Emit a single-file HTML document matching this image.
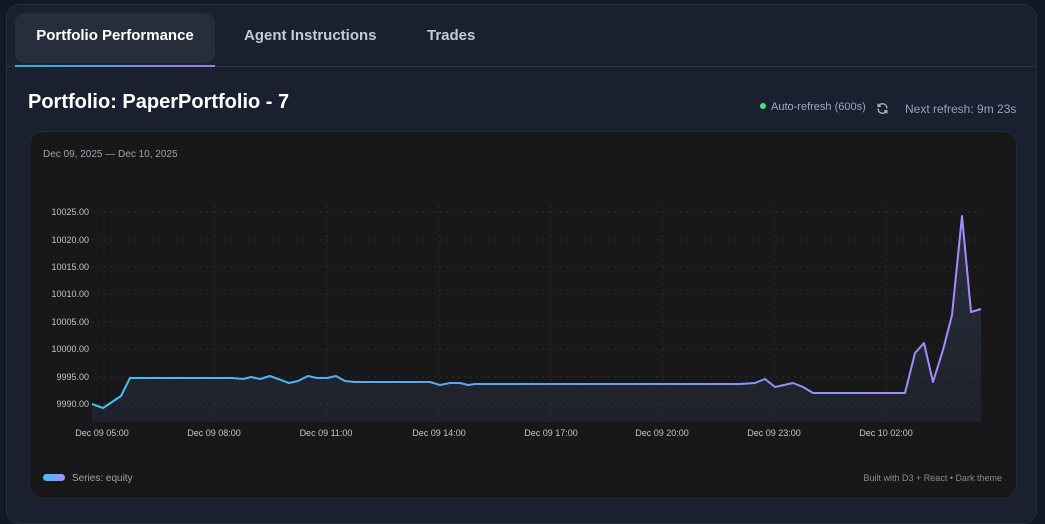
<!DOCTYPE html>
<html><head><style>
*{margin:0;padding:0;box-sizing:border-box}
body{width:1045px;height:506px;background:#121826;font-family:"Liberation Sans",sans-serif;overflow:hidden;position:relative}
.card{position:absolute;left:6px;top:4px;width:1031px;height:520px;background:#1a2030;border-radius:14px;border:1px solid #262d3d}
.tabs{position:absolute;left:0;top:0;width:100%;height:62px;border-bottom:1px solid #2c3344}
.tab{position:absolute;top:8px;height:50px;line-height:46px;font-weight:bold;font-size:15px;color:#c5cad3}
.tab.act{left:8px;width:200px;background:#272d3b;border-radius:10px;color:#fff;text-align:center}
.ul{position:absolute;left:8px;top:60px;width:200px;height:2px;background:linear-gradient(90deg,#22b8d0,#a57ad8)}
h1{position:absolute;left:28px;top:91px;font-size:20px;color:#fff;font-weight:bold}
.ar{position:absolute;left:760px;top:101px;font-size:11px;color:#9aa8c0}
.dot{display:inline-block;width:6px;height:6px;border-radius:50%;background:#4ade80;margin-right:5px;vertical-align:1px}
.nr{position:absolute;left:905px;top:102px;font-size:12px;color:#93a3bd}
.chart{position:absolute;left:29px;top:131px;width:988px;height:368px;background:#18181b;border-radius:14px;border:1px solid #262a33}
</style></head><body>
<div class="card">
<div class="tabs">
<div class="tab act">Portfolio Performance</div>
<div class="tab" style="left:237px">Agent Instructions</div>
<div class="tab" style="left:420px">Trades</div>
<div class="ul"></div>
</div>
</div>
<h1>Portfolio: PaperPortfolio - 7</h1>
<div class="ar"><span class="dot"></span>Auto-refresh (600s)</div>
<svg style="position:absolute;left:876px;top:102px" width="13" height="13" viewBox="0 0 24 24" fill="none" stroke="#aab3c2" stroke-width="2.5" stroke-linecap="round"><path d="M20 11a8 8 0 0 0-14-5l-2 2M4 4v4h4M4 13a8 8 0 0 0 14 5l2-2M20 20v-4h-4"/></svg>
<div class="nr">Next refresh: 9m 23s</div>
<div class="chart"></div>
<svg style="position:absolute;left:0;top:0" width="1045" height="506" font-family="Liberation Sans,sans-serif">
<defs>
<linearGradient id="g" x1="92" x2="982" y1="0" y2="0" gradientUnits="userSpaceOnUse"><stop offset="0" stop-color="#38c6f4"/><stop offset="0.45" stop-color="#5fa3f5"/><stop offset="1" stop-color="#a78bfa"/></linearGradient>
<linearGradient id="f" x1="0" x2="0" y1="200" y2="420" gradientUnits="userSpaceOnUse"><stop offset="0" stop-color="#3b4a6b" stop-opacity="0.5"/><stop offset="1" stop-color="#2a3040" stop-opacity="0.4"/></linearGradient>
<linearGradient id="lg" x1="0" x2="1"><stop offset="0" stop-color="#38c6f4"/><stop offset="1" stop-color="#a78bfa"/></linearGradient>
</defs>
<text x="43" y="157" font-size="10" fill="#a1a1aa">Dec 09, 2025 — Dec 10, 2025</text>
<g stroke="#2c2c31" stroke-dasharray="2,4" stroke-width="1">
<line x1="92" x2="982" y1="212" y2="212"/><line x1="92" x2="982" y1="240" y2="240"/><line x1="92" x2="982" y1="267" y2="267"/><line x1="92" x2="982" y1="294" y2="294"/><line x1="92" x2="982" y1="322" y2="322"/><line x1="92" x2="982" y1="349" y2="349"/><line x1="92" x2="982" y1="377" y2="377"/><line x1="92" x2="982" y1="404" y2="404"/>
<line x1="104" x2="104" y1="205" y2="422"/><line x1="215" x2="215" y1="205" y2="422"/><line x1="327" x2="327" y1="205" y2="422"/><line x1="439" x2="439" y1="205" y2="422"/><line x1="551" x2="551" y1="205" y2="422"/><line x1="662" x2="662" y1="205" y2="422"/><line x1="774" x2="774" y1="205" y2="422"/><line x1="886" x2="886" y1="205" y2="422"/>
</g>
<g font-size="9" fill="#c4c4cc" text-anchor="end">
<text x="89" y="215">10025.00</text><text x="89" y="243">10020.00</text><text x="89" y="270">10015.00</text><text x="89" y="297">10010.00</text><text x="89" y="325">10005.00</text><text x="89" y="352">10000.00</text><text x="89" y="380">9995.00</text><text x="89" y="407">9990.00</text>
</g>
<g font-size="9" fill="#c4c4cc" text-anchor="middle">
<text x="102" y="436">Dec 09 05:00</text><text x="214" y="436">Dec 09 08:00</text><text x="326" y="436">Dec 09 11:00</text><text x="439" y="436">Dec 09 14:00</text><text x="551" y="436">Dec 09 17:00</text><text x="662" y="436">Dec 09 20:00</text><text x="774" y="436">Dec 09 23:00</text><text x="886" y="436">Dec 10 02:00</text>
</g>
<path fill="url(#f)" d="M92,404 103,408 121,396 130,378 232,378 243,379 251,377 260,379 270,376 289,383 298,381 308,376 317,378 327,378 336,376 345,381 355,382 430,382 440,385 450,383 460,383 468,385 475,384 740,384 755,383 765,379 775,387 793,383 803,387 813,393 905,393 915,353 924,343 933,382 943,350 952,315 962,216 971,312 981,309 981,422 92,422Z"/>
<path fill="none" stroke="url(#g)" stroke-width="2" stroke-linejoin="round" d="M92,404 103,408 121,396 130,378 232,378 243,379 251,377 260,379 270,376 289,383 298,381 308,376 317,378 327,378 336,376 345,381 355,382 430,382 440,385 450,383 460,383 468,385 475,384 740,384 755,383 765,379 775,387 793,383 803,387 813,393 905,393 915,353 924,343 933,382 943,350 952,315 962,216 971,312 981,309"/>
<rect x="43" y="474" width="22" height="7" rx="3.5" fill="url(#lg)"/>
<text x="72" y="481" font-size="10" fill="#a1a1aa">Series: equity</text>
<text x="1002" y="481" font-size="9" fill="#8a8a93" text-anchor="end">Built with D3 + React • Dark theme</text>
</svg>
</body></html>
